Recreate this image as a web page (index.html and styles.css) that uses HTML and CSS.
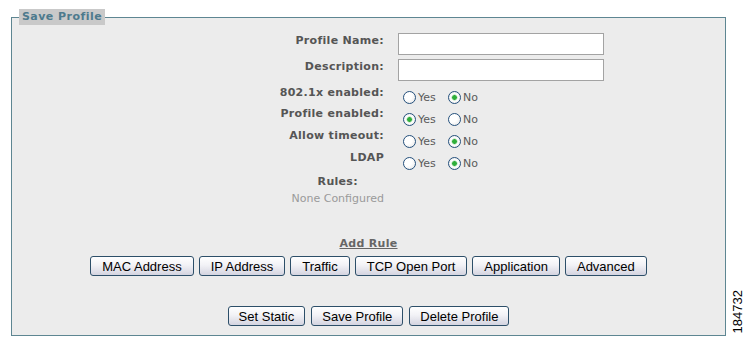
FILE: index.html
```html
<!DOCTYPE html>
<html lang="en">
<head>
    <meta charset="UTF-8">
    <title>Save Profile</title>
    <link rel="stylesheet" href="styles.css">
</head>
<body>
    <fieldset class="profile-box">
        <legend class="profile-legend">Save Profile</legend>
        <div class="profile-form">
            <div class="row text-row">
                <label class="field-label" for="profileName">Profile Name:</label>
                <input type="text" id="profileName" class="text-input">
            </div>
            <div class="row text-row">
                <label class="field-label" for="description">Description:</label>
                <input type="text" id="description" class="text-input">
            </div>

            <div class="row radio-row first-radio">
                <span class="field-label">802.1x enabled:</span>
                <div class="radio-group">
                    <label class="radio-opt"><input type="radio" name="dot1x">Yes</label>
                    <label class="radio-opt"><input type="radio" name="dot1x" checked>No</label>
                </div>
            </div>
            <div class="row radio-row">
                <span class="field-label">Profile enabled:</span>
                <div class="radio-group">
                    <label class="radio-opt"><input type="radio" name="enabled" checked>Yes</label>
                    <label class="radio-opt"><input type="radio" name="enabled">No</label>
                </div>
            </div>
            <div class="row radio-row">
                <span class="field-label">Allow timeout:</span>
                <div class="radio-group">
                    <label class="radio-opt"><input type="radio" name="timeout">Yes</label>
                    <label class="radio-opt"><input type="radio" name="timeout" checked>No</label>
                </div>
            </div>
            <div class="row radio-row">
                <span class="field-label">LDAP</span>
                <div class="radio-group">
                    <label class="radio-opt"><input type="radio" name="ldap">Yes</label>
                    <label class="radio-opt"><input type="radio" name="ldap" checked>No</label>
                </div>
            </div>

            <div class="row rules-row">
                <div class="rules-cell">
                    <div class="rules-inner">
                        <div class="rules-title">Rules:</div>
                        <div class="rules-none">None Configured</div>
                    </div>
                </div>
            </div>

            <div class="add-rule"><a href="#">Add Rule</a></div>
            <div class="btn-row">
                <button type="button" class="btn">MAC Address</button>
                <button type="button" class="btn">IP Address</button>
                <button type="button" class="btn">Traffic</button>
                <button type="button" class="btn">TCP Open Port</button>
                <button type="button" class="btn">Application</button>
                <button type="button" class="btn">Advanced</button>
            </div>

            <div class="btn-row bottom-row">
                <button type="button" class="btn">Set Static</button>
                <button type="button" class="btn">Save Profile</button>
                <button type="button" class="btn">Delete Profile</button>
            </div>
        </div>
    </fieldset>
    <div class="fig-id">184732</div>
</body>
</html>
```

FILE: styles.css
```css
* {
    margin: 0;
    padding: 0;
    box-sizing: border-box;
}

body {
    width: 753px;
    height: 349px;
    padding: 9px 0 0 11px;
    display: flex;
    align-items: flex-start;
    background: #ffffff;
    font-family: "DejaVu Sans", Verdana, sans-serif;
    font-size: 11px;
    color: #555555;
}

.profile-box {
    width: 715px;
    height: 327px;
    border: 1px solid #5e8692;
    background: #ececec;
}

.profile-legend {
    margin-left: 7px;
    padding: 0 3px;
    line-height: 16px;
    font-weight: bold;
    letter-spacing: 0.45px;
    color: #4d7a8d;
    background: #c9c9c9;
}

.profile-form {
    padding-top: 8px;
}

.row {
    display: grid;
    grid-template-columns: 372px 1fr;
    column-gap: 14px;
}

.field-label {
    text-align: right;
    font-weight: bold;
    line-height: 14px;
    letter-spacing: 0.3px;
    color: #555555;
}

.text-row {
    height: 22px;
    margin-bottom: 4px;
}

.text-row .field-label {
    padding-top: 1px;
}

.text-input {
    width: 206px;
    height: 22px;
    border: 1px solid #a3a3a3;
    background: #ffffff;
}

.radio-row {
    height: 22px;
}

.first-radio {
    margin-top: 3px;
}

.first-radio .field-label {
    padding-top: 1px;
}

.radio-group {
    display: flex;
    padding-top: 3px;
}

.radio-opt {
    display: flex;
    align-items: center;
    margin-left: 5px;
    width: 40px;
    line-height: 13px;
    color: #5a5a5a;
}

.radio-opt input {
    appearance: none;
    width: 13px;
    height: 13px;
    margin-right: 2px;
    border: 1px solid #24507c;
    border-radius: 50%;
    background: radial-gradient(circle at 35% 35%, #ffffff 40%, #e2e2e2 100%);
}

.radio-opt input:checked {
    background: radial-gradient(circle, #2fae3a 0 2px, #a6dba9 2.5px, #ffffff 3.5px, #e2e2e2 100%);
}

.rules-row {
    margin-top: 2px;
}

.rules-cell {
    text-align: right;
}

.rules-inner {
    display: inline-block;
    text-align: center;
}

.rules-title {
    font-weight: bold;
    line-height: 14px;
    height: 17px;
    letter-spacing: 0.3px;
}

.rules-none {
    line-height: 14px;
    color: #9a9a9a;
}

.add-rule {
    margin-top: 31px;
    text-align: center;
    line-height: 14px;
}

.add-rule a {
    font-weight: bold;
    letter-spacing: 0.3px;
    color: #666666;
    text-decoration: underline;
}

.btn-row {
    display: flex;
    justify-content: center;
    gap: 5px;
    margin-top: 5px;
}

.bottom-row {
    gap: 6px;
    margin-top: 30px;
}

.btn {
    height: 20px;
    padding: 0 11px;
    border: 1px solid #2d4f69;
    border-radius: 3px;
    background: linear-gradient(#ffffff, #f2f2f6 45%, #d4d4e0);
    font-family: "Liberation Sans", Arial, sans-serif;
    font-size: 13px;
    color: #000000;
    cursor: pointer;
}

.bottom-row .btn {
    padding: 0 10px;
}

.fig-id {
    align-self: flex-end;
    margin: 0 0 16px 6px;
    writing-mode: vertical-rl;
    transform: rotate(180deg);
    font-family: "Liberation Sans", Arial, sans-serif;
    font-size: 13px;
    line-height: 12px;
    color: #000000;
}
```
